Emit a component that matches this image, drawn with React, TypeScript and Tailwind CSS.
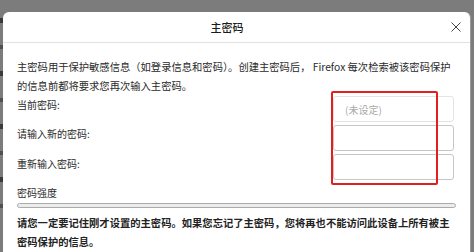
import React from "react";

const FONT = { fontFamily: '"Noto Sans CJK SC", "Noto Sans", sans-serif' };

export default function App() {
  return (
    <div className="relative w-[474px] h-[252px] overflow-hidden bg-[#7c7c7c] flex" style={FONT}>
      {/* background page hints on the left */}
      <div className="w-[3px] flex flex-col gap-[22px] pt-[18px]">
        <div className="h-[5px] bg-[#3a3a3a]" />
        <div className="h-[4px] bg-[#505050]" />
        <div className="h-[5px] bg-[#3a3a3a]" />
        <div className="h-[4px] bg-[#505050]" />
        <div className="h-[5px] bg-[#3a3a3a]" />
        <div className="h-[4px] bg-[#505050]" />
        <div className="h-[5px] bg-[#3a3a3a]" />
        <div className="h-[4px] bg-[#505050]" />
      </div>
      <div className="mt-[12px] w-[468px] h-[260px] bg-white rounded-t-[6px] border-r border-[#9a9a9a] flex flex-col">
        {/* header */}
        <div className="h-[31px] flex items-center pr-[9px] border-b border-[#e2e2e2]">
          <div className="flex-1 text-center text-[11px] font-medium text-[#1c1c1c]">主密码</div>
          <svg width="10" height="10" viewBox="0 0 10 10" className="shrink-0">
            <path d="M0.5 0.5 L9.5 9.5 M9.5 0.5 L0.5 9.5" stroke="#444" strokeWidth="1" fill="none" />
          </svg>
        </div>
        {/* body */}
        <div className="pl-[14px] pr-[13px] pt-[14px] text-[10.3px] text-[#2a2a2a]">
          <p className="leading-[19px]">
            主密码用于保护敏感信息（如登录信息和密码）。创建主密码后， Firefox 每次检索被该密码保护的信息前都将要求您再次输入主密码。
          </p>
          <div className="mt-[1px] flex flex-col gap-[3px] pr-[3px] text-[10px]">
            <div className="h-[26px] flex justify-between">
              <span className="mt-[2px] leading-[14px]">当前密码:</span>
              <div className="w-[121px] h-[26px] rounded-[3px] border border-[#e4e4e4] flex items-center pl-[11px] text-[#a9a9a9]">
                (未设定)
              </div>
            </div>
            <div className="h-[26px] flex justify-between">
              <span className="mt-[2px] leading-[14px]">请输入新的密码:</span>
              <div className="w-[121px] h-[26px] rounded-[3px] border border-[#c6c6c6]" />
            </div>
            <div className="h-[26px] flex justify-between">
              <span className="mt-[3px] leading-[14px]">重新输入密码:</span>
              <div className="w-[121px] h-[26px] rounded-[3px] border border-[#c6c6c6]" />
            </div>
          </div>
          <div className="mt-[6px] leading-[14px] text-[10px]">密码强度</div>
          <div className="mt-[3px] h-[5px] rounded-full border border-[#ababab] bg-[#ececec] mr-[1px]" />
          <p className="mt-[5px] leading-[19px] font-bold text-[#222]">
            请您一定要记住刚才设置的主密码。如果您忘记了主密码，您将再也不能访问此设备上所有被主
            <br />
            密码保护的信息。
          </p>
        </div>
      </div>
      {/* red annotation box */}
      <div className="absolute left-[331px] top-[91px] w-[107px] h-[94px] border-2 border-[#e0201e] rounded-[2px]" />
    </div>
  );
}
